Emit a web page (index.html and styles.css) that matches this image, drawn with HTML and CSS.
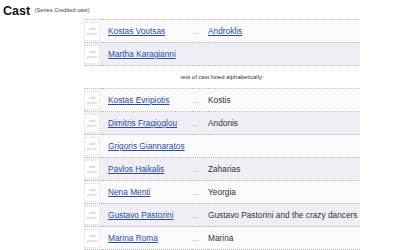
FILE: index.html
```html
<!DOCTYPE html>
<html>
<head>
<meta charset="utf-8">
<link rel="stylesheet" href="styles.css">
</head>
<body>
<div class="head"><span class="title">Cast</span> <span class="sub">(Series Credited cast)</span></div>
<table class="cast">
<tr class="odd first"><td class="pic"><div class="ph">add<br>photo</div></td><td class="nm"><a href="#">Kostas Voutsas</a></td><td class="ell">...</td><td class="ch"><a href="#">Androklis</a></td></tr>
<tr class="even"><td class="pic"><div class="ph">add<br>photo</div></td><td class="nm"><a href="#">Martha Karagianni</a></td><td class="ell"></td><td class="ch"></td></tr>
<tr class="sep"><td colspan="4">rest of cast listed alphabetically:</td></tr>
<tr class="odd first"><td class="pic"><div class="ph">add<br>photo</div></td><td class="nm"><a href="#">Kostas Evripiotis</a></td><td class="ell">...</td><td class="ch">Kostis</td></tr>
<tr class="even"><td class="pic"><div class="ph">add<br>photo</div></td><td class="nm"><a href="#">Dimitris Fragioglou</a></td><td class="ell">...</td><td class="ch">Andonis</td></tr>
<tr class="odd"><td class="pic"><div class="ph">add<br>photo</div></td><td class="nm"><a href="#">Grigoris Giannaratos</a></td><td class="ell"></td><td class="ch"></td></tr>
<tr class="even"><td class="pic"><div class="ph">add<br>photo</div></td><td class="nm"><a href="#">Pavlos Haikalis</a></td><td class="ell">...</td><td class="ch">Zaharias</td></tr>
<tr class="odd"><td class="pic"><div class="ph">add<br>photo</div></td><td class="nm"><a href="#">Nena Menti</a></td><td class="ell">...</td><td class="ch">Yeorgia</td></tr>
<tr class="even"><td class="pic"><div class="ph">add<br>photo</div></td><td class="nm"><a href="#">Gustavo Pastorini</a></td><td class="ell">...</td><td class="ch">Gustavo Pastorini and the crazy dancers</td></tr>
<tr class="odd"><td class="pic"><div class="ph">add<br>photo</div></td><td class="nm"><a href="#">Marina Roma</a></td><td class="ell">...</td><td class="ch">Marina</td></tr>
</table>
</body>
</html>
```
FILE: styles.css
```css
html, body {
  margin: 0;
  padding: 0;
  background: #fff;
  font-family: "Liberation Sans", Arial, sans-serif;
  color: #333;
}
.head {
  padding: 2px 0 0 3px;
  height: 17px;
  line-height: 15px;
}
.title {
  font-size: 12.5px;
  font-weight: bold;
  color: #111;
}
.sub {
  font-size: 5.7px;
  color: #444;
  vertical-align: 3px;
}
.cast {
  margin-left: 84px;
  width: 276px;
  border-collapse: collapse;
  font-size: 8.3px;
}
.cast td {
  padding: 0;
  height: 22px;
  vertical-align: middle;
  border-bottom: 1px dotted #bbb;
}
.cast tr.first td {
  border-top: 1px dotted #bbb;
}
.cast tr.odd td { background: #fafafa; }
.cast tr.even td { background: #eeeef4; }
.cast td.pic {
  width: 18px;
}
.ph {
  width: 16px;
  height: 19px;
  border: 1px dotted #d8d8d8;
  background: #fff;
  font-size: 4px;
  line-height: 5px;
  color: #bbb;
  text-align: center;
  box-sizing: border-box;
  padding-top: 3px;
}
.cast td.nm {
  width: 84px;
  padding-left: 6px;
}
.cast a {
  color: #2a4ba6;
  text-decoration: underline;
}
.cast td.ell {
  width: 16px;
  color: #aaa;
}
.cast td.ch {
  color: #333;
}
.cast tr.sep td {
  background: #fff;
  border-bottom: none;
  text-align: center;
  font-size: 5.9px;
  color: #333;
  height: 22px;
}
```
